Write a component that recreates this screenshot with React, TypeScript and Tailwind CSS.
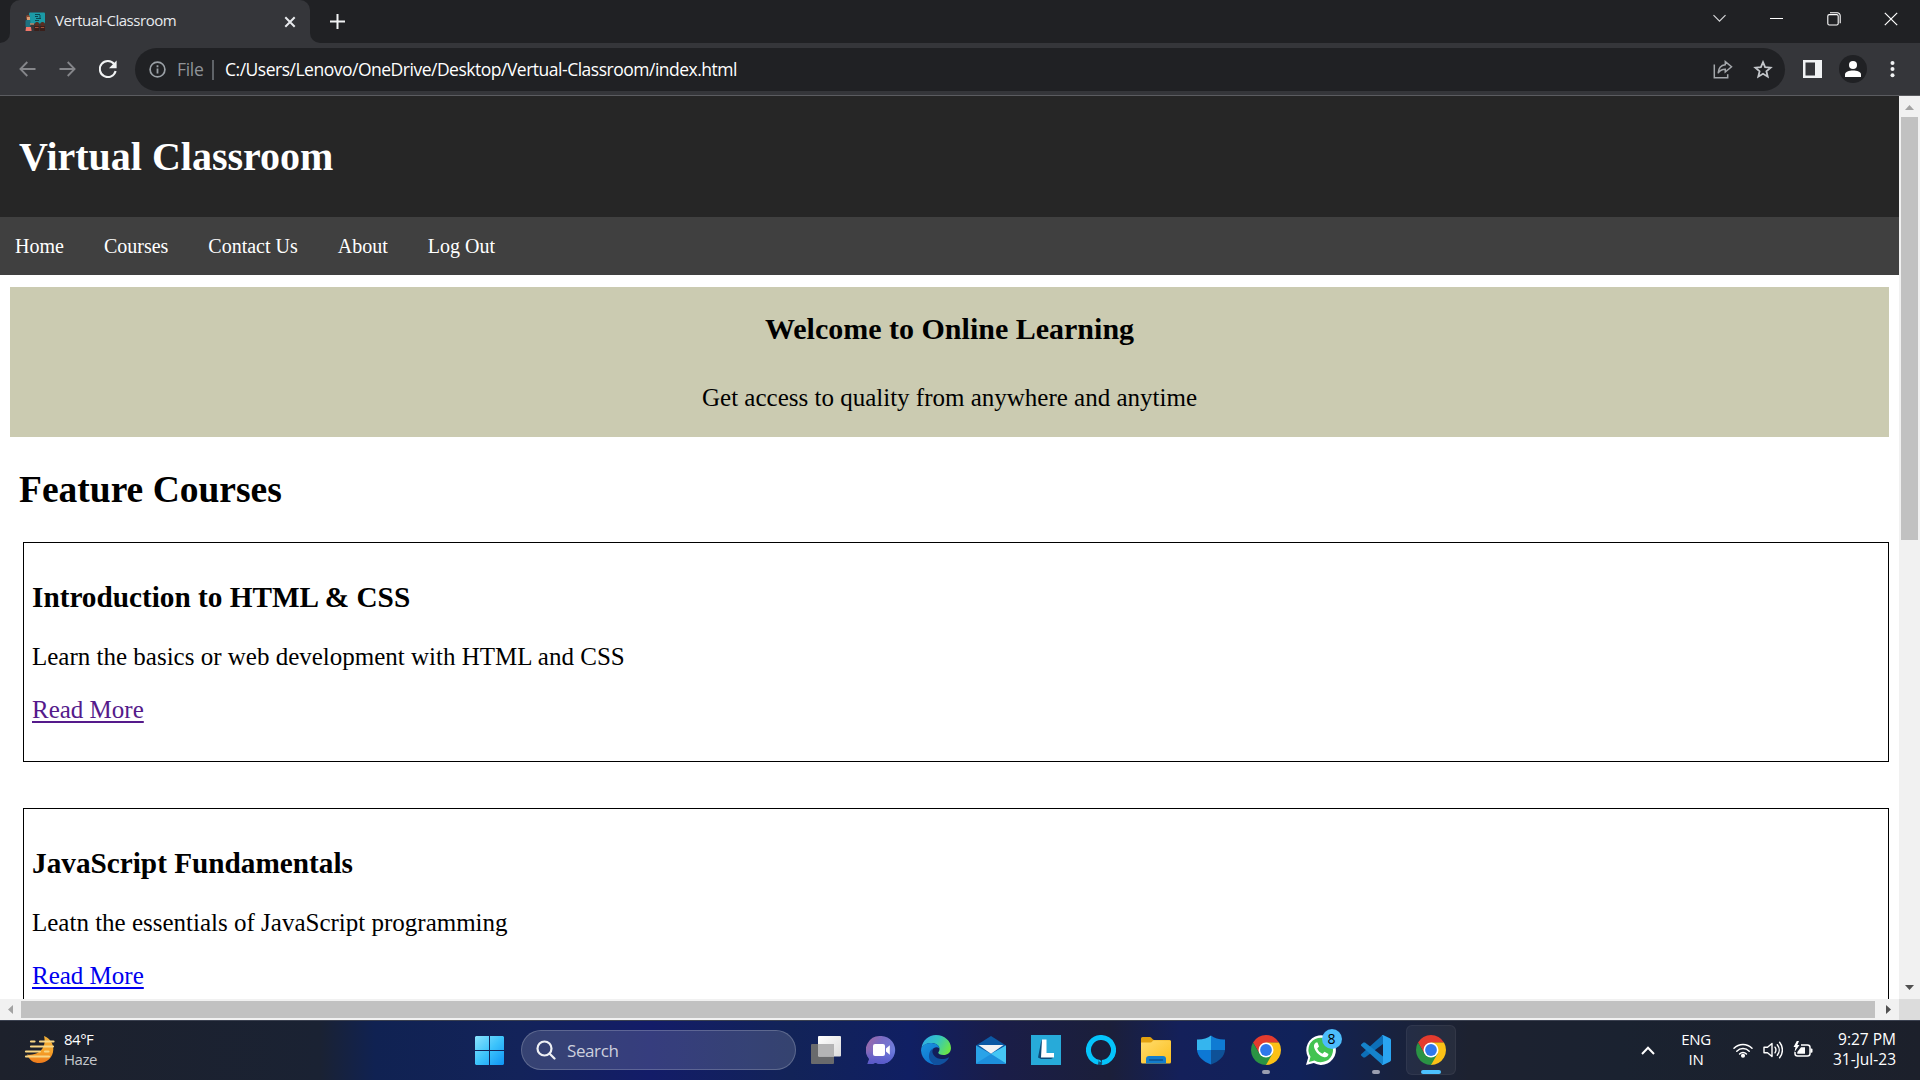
import React from "react";

const uiFont = "font-['Open_Sans','Noto_Sans',sans-serif]";

function Favicon() {
  return (
    <svg width="20" height="20" viewBox="0 0 20 20">
      <rect x="4" y="0.5" width="16" height="11" rx="1" fill="#1b9aa6" />
      <path d="M10 2.5h5M10 4.5h3M11 6.5h5M10 8.5h4M15 3v4" stroke="#0b4650" strokeWidth="1" fill="none" />
      <rect x="1" y="3" width="4" height="5" rx="2" fill="#8a4a32" />
      <rect x="2" y="5" width="3" height="3" fill="#d9a077" />
      <rect x="0.5" y="8" width="5" height="7" rx="1" fill="#1d7180" />
      <path d="M5 12h4" stroke="#d9a077" strokeWidth="1.2" />
      <path d="M1 15h5l0.6 4H0.5z" fill="#f0776a" />
      <rect x="10" y="10" width="4" height="4" rx="1.6" fill="#5a2d20" />
      <rect x="15.5" y="10" width="4" height="4" rx="1.6" fill="#5a2d20" />
      <rect x="9.3" y="14" width="5" height="5" fill="#3a1f1a" />
      <rect x="15" y="14" width="5" height="5" fill="#3a1f1a" />
      <path d="M10 15.5h3.5M15.8 15.5h3.4" stroke="#a4503a" />
    </svg>
  );
}

function TabStrip() {
  return (
    <div className="flex h-[43px] shrink-0 bg-[#202124]">
      <div className="flex w-[10px] items-end bg-[#35363a]">
        <div className="h-[43px] w-[10px] rounded-br-[10px] bg-[#202124]" />
      </div>
      <div className="flex w-[300px] items-center rounded-t-[10px] bg-[#35363a] pl-[15px] pr-[14px]">
        <Favicon />
        <span className="ml-[10px] flex-1 whitespace-nowrap pb-[3px] text-[15px] leading-[20px] tracking-[-0.45px] text-[#e8eaed]">
          Vertual-Classroom
        </span>
        <svg width="12" height="12" viewBox="0 0 12 12" stroke="#e8eaed" strokeWidth="2">
          <path d="M1.3 1.3l9.4 9.4M10.7 1.3l-9.4 9.4" />
        </svg>
      </div>
      <div className="flex w-[10px] bg-[#35363a]">
        <div className="h-[43px] w-[10px] rounded-bl-[10px] bg-[#202124]" />
      </div>
      <svg className="ml-[9px] mt-[13px]" width="17" height="17" viewBox="0 0 17 17" stroke="#f1f3f4" strokeWidth="2">
        <path d="M8.5 1v15M1 8.5h15" />
      </svg>
      <div className="ml-auto flex h-[37px] items-center pr-[22px]">
        <svg className="mr-[43px]" width="15" height="9" viewBox="0 0 15 9" fill="none" stroke="#d5d6d8" strokeWidth="1.2">
          <path d="M1.5 1.2l6 6 6-6" />
        </svg>
        <div className="mr-[44px] h-px w-[13px] bg-white" />
        <svg className="mr-[43px]" width="14" height="14" viewBox="0 0 14 14" fill="none" stroke="#fff" strokeWidth="1.1">
          <rect x="0.8" y="2.6" width="10.4" height="10.4" rx="1.5" />
          <path d="M3 0.8h7.2a3 3 0 0 1 3 3v7.4" />
        </svg>
        <svg width="14" height="14" viewBox="0 0 14 14" stroke="#fff" strokeWidth="1.2">
          <path d="M0.8 0.8l12.4 12.4M13.2 0.8L0.8 13.2" />
        </svg>
      </div>
    </div>
  );
}

function Toolbar() {
  return (
    <div className="flex h-[53px] shrink-0 items-start border-b border-[#5b5c60] bg-[#35363a] pt-[5px]">
      <div className="flex h-[43px] w-[135px] items-center pb-px pl-[19px]">
        <svg width="17" height="16" viewBox="0 0 17 16" fill="none" stroke="#85868a" strokeWidth="1.8">
          <path d="M16.5 8H1.6M8.3 1L1.4 8l6.9 7" />
        </svg>
        <svg className="ml-[23px]" width="17" height="16" viewBox="0 0 17 16" fill="none" stroke="#85868a" strokeWidth="1.8">
          <path d="M0.5 8h14.9M8.7 1l6.9 7-6.9 7" />
        </svg>
        <svg className="ml-[23px]" width="18" height="18" viewBox="0 0 18 18">
          <path d="M15.2 4.2A8 8 0 1 0 16.6 11" fill="none" stroke="#f1f3f4" strokeWidth="2.1" />
          <path d="M17.6 0.6v7.6H10z" fill="#f1f3f4" />
        </svg>
      </div>
      <div className="flex h-[43px] w-[1650px] items-center rounded-full bg-[#202124] pl-[14px] pr-[12px]">
        <svg width="17" height="17" viewBox="0 0 17 17">
          <circle cx="8.5" cy="8.5" r="7.4" fill="none" stroke="#9aa0a6" strokeWidth="1.7" />
          <path d="M8.5 7.6v4.8M8.5 4.2v2" stroke="#9aa0a6" strokeWidth="1.8" />
        </svg>
        <span className="ml-[11px] w-[35px] whitespace-nowrap pb-px text-[17.5px] leading-[24px] tracking-[-0.3px] text-[#8f9398]">File</span>
        <div className="h-[20px] w-[2px] bg-[#5f6368]" />
        <span className="ml-[11px] whitespace-nowrap pb-px text-[17.5px] leading-[24px] tracking-[-0.492px] text-white">
          C:/Users/Lenovo/OneDrive/Desktop/Vertual-Classroom/index.html
        </span>
        <svg className="ml-auto" width="20" height="19" viewBox="0 0 20 19" fill="none" stroke="#a4a7ab" strokeWidth="1.5">
          <path d="M1.3 4.5v13.2h13.4v-3.5" />
          <path d="M12.3 1.6l6.2 5.2-6.2 5.2V9.2c-3.6 0-5.6 1.2-7.2 4 .3-4.6 2.6-8 7.2-8.5z" />
        </svg>
        <svg className="ml-[20px]" width="20" height="19" viewBox="0 0 20 19" fill="none" stroke="#c4c7cb" strokeWidth="1.8">
          <path d="M10 2.2l2.1 5 5.5.5-4.2 3.6 1.3 5.4-4.7-2.9-4.7 2.9 1.3-5.4L2.4 7.7l5.5-.5z" />
        </svg>
      </div>
      <div className="flex h-[43px] flex-1 items-center pb-px pl-[18px]">
        <svg width="19" height="18" viewBox="0 0 19 18">
          <rect width="19" height="18" fill="#f1f3f4" />
          <rect x="2.5" y="2.5" width="9.5" height="13" fill="#35363a" />
        </svg>
        <div className="ml-[17px] flex size-[28px] items-center justify-center rounded-full bg-[#202124]">
          <svg width="16" height="16" viewBox="0 0 16 16" fill="#fff">
            <circle cx="8" cy="4" r="4" />
            <path d="M0 16v-2.5C0 10.8 4 9.5 8 9.5s8 1.3 8 4V16z" />
          </svg>
        </div>
        <svg className="ml-[23px]" width="5" height="18" viewBox="0 0 5 18" fill="#f1f3f4">
          <circle cx="2.5" cy="3" r="2" />
          <circle cx="2.5" cy="9" r="2" />
          <circle cx="2.5" cy="15.3" r="2" />
        </svg>
      </div>
    </div>
  );
}

const navItems = ["Home", "Courses", "Contact Us", "About", "Log Out"];

function CourseCard({ title, text, visited }: { title: string; text: string; visited?: boolean }) {
  return (
    <article className="ml-[23px] mr-[10px] h-[220px] shrink-0 border border-black pl-[8px] pt-[37px]">
      <h3 className="text-[29.25px] font-bold leading-[34px]">{title}</h3>
      <p className="mt-[29px] text-[25px] leading-[28px]">{text}</p>
      <p className="mt-[25px] text-[25px] leading-[28px]">
        <a
          className={
            visited
              ? "text-[#551a8b] underline decoration-2 underline-offset-[3px]"
              : "text-[#0000ee] underline decoration-2 underline-offset-[3px]"
          }
        >
          Read More
        </a>
      </p>
    </article>
  );
}

function WebPage() {
  return (
    <main className="flex h-[903px] min-w-0 flex-1 flex-col overflow-hidden bg-white font-['Liberation_Serif','Times_New_Roman',serif] text-black">
      <header className="h-[121px] shrink-0 bg-[#262626] pl-[19px] pt-[38px]">
        <h1 className="text-[40px] font-bold leading-[46px] text-white">Virtual Classroom</h1>
      </header>
      <nav className="flex h-[58px] shrink-0 gap-[40px] bg-[#404040] pl-[15px] text-[20px] leading-[59px] text-white">
        {navItems.map((item) => (
          <a key={item}>{item}</a>
        ))}
      </nav>
      <section className="mx-[10px] mt-[12px] h-[150px] shrink-0 bg-[#cbcbb1] pt-[25px] text-center">
        <h2 className="text-[30px] font-bold leading-[34px]">Welcome to Online Learning</h2>
        <p className="mt-[38px] text-[25px] leading-[28px]">Get access to quality from anywhere and anytime</p>
      </section>
      <h2 className="mb-[31px] ml-[19px] mt-[32px] text-[37.5px] font-bold leading-[42px]">Feature Courses</h2>
      <CourseCard title="Introduction to HTML & CSS" text="Learn the basics or web development with HTML and CSS" visited />
      <div className="h-[46px] shrink-0" />
      <CourseCard title="JavaScript Fundamentals" text="Leatn the essentials of JavaScript programming" />
    </main>
  );
}

function VerticalScrollbar() {
  return (
    <div className="flex w-[21px] flex-col items-center bg-[#f1f1f1]">
      <svg className="mt-[9px]" width="9" height="5" viewBox="0 0 9 5" fill="#a3a3a3">
        <path d="M4.5 0L9 5H0z" />
      </svg>
      <div className="mt-[7px] h-[423px] w-[17px] bg-[#c1c1c1]" />
      <svg className="mb-[9px] mt-auto" width="9" height="5" viewBox="0 0 9 5" fill="#505050">
        <path d="M0 0h9L4.5 5z" />
      </svg>
    </div>
  );
}

function HorizontalScrollbar() {
  return (
    <div className="flex h-[21px] shrink-0 items-center bg-[#f1f1f1]">
      <svg className="ml-[8px]" width="5" height="9" viewBox="0 0 5 9" fill="#a3a3a3">
        <path d="M0 4.5L5 0v9z" />
      </svg>
      <div className="ml-[8px] h-[17px] w-[1854px] bg-[#c1c1c1]" />
      <svg className="ml-[11px]" width="5" height="9" viewBox="0 0 5 9" fill="#505050">
        <path d="M0 0l5 4.5L0 9z" />
      </svg>
      <div className="ml-auto h-[21px] w-[21px] bg-[#dcdcdc]" />
    </div>
  );
}

function WeatherIcon() {
  return (
    <svg width="32" height="30" viewBox="0 0 32 30">
      <defs>
        <linearGradient id="moon" x1="0" y1="0" x2="0" y2="1">
          <stop offset="0" stopColor="#f0b03a" />
          <stop offset="0.6" stopColor="#f5a028" />
          <stop offset="1" stopColor="#ee7a1c" />
        </linearGradient>
      </defs>
      <path d="M20 1c6 2.5 9.500 7.5 9.300 13.500C29 22.500 23 28 15.500 28 9.500 28 5.500 25.500 3 19.500c4 .5 8.500 0 12-2.500 5.500-4 6.500-10 5-16z" fill="url(#moon)" />
      <g stroke="#f7d684" strokeWidth="2.2" strokeLinecap="round">
        <path d="M7 6.5h3.500M16 6.5h13.500M7 11.5h22" />
        <path d="M2 16.5h14M21 16.5h3.500M2 21.5h23" />
      </g>
    </svg>
  );
}

function WindowsIcon() {
  return (
    <svg width="29" height="29" viewBox="0 0 29 29">
      <defs>
        <linearGradient id="win" x1="0" y1="0" x2="1" y2="1">
          <stop offset="0" stopColor="#8be2fd" />
          <stop offset="0.5" stopColor="#3cc3fb" />
          <stop offset="1" stopColor="#0f94f5" />
        </linearGradient>
      </defs>
      <path d="M1 0h13v14H0V1zM15 0h13l1 1v13H15zM0 15h14v14H1l-1-1zM15 15h14v13l-1 1H15z" fill="url(#win)" />
    </svg>
  );
}

function TaskViewIcon() {
  return (
    <svg width="30" height="30" viewBox="0 0 30 30">
      <defs>
        <linearGradient id="tvf" x1="0" y1="0" x2="1" y2="1">
          <stop offset="0" stopColor="#fff" />
          <stop offset="1" stopColor="#dcdcdc" />
        </linearGradient>
      </defs>
      <rect x="0" y="9" width="23" height="20" rx="1" fill="#696a6c" />
      <rect x="7" y="1" width="23" height="20.5" rx="1" fill="url(#tvf)" />
      <path d="M7 9h16v12.5H8l-1-1z" fill="#b4b4b5" />
    </svg>
  );
}

function ChatIcon() {
  return (
    <svg width="30" height="30" viewBox="0 0 30 30">
      <defs>
        <linearGradient id="chat" x1="0" y1="0" x2="1" y2="0.6">
          <stop offset="0" stopColor="#a5689f" />
          <stop offset="0.45" stopColor="#7b6cc4" />
          <stop offset="1" stopColor="#6b7fe0" />
        </linearGradient>
        <linearGradient id="chatb" x1="0" y1="0" x2="0" y2="1">
          <stop offset="0.5" stopColor="#5757c8" stopOpacity="0" />
          <stop offset="1" stopColor="#5757c8" />
        </linearGradient>
      </defs>
      <path d="M15.5 1a14 14 0 1 1-6 26.8c-2.5 1.2-5 1.5-8 .9.5-2 1.6-3 1.5-5A14 14 0 0 1 15.5 1z" fill="url(#chat)" />
      <path d="M15.5 1a14 14 0 1 1-6 26.8c-2.5 1.2-5 1.5-8 .9.5-2 1.6-3 1.5-5A14 14 0 0 1 15.5 1z" fill="url(#chatb)" />
      <rect x="7" y="9" width="12" height="12" rx="2" fill="#fff" />
      <path d="M20 13.5l3.8-3.2v9.4L20 16.5z" fill="#fff" />
    </svg>
  );
}

function EdgeIcon() {
  return (
    <svg width="30" height="30" viewBox="0 0 30 30">
      <defs>
        <linearGradient id="edgeTop" x1="0" y1="0.2" x2="1" y2="0.6">
          <stop offset="0" stopColor="#2fa9ea" />
          <stop offset="0.5" stopColor="#34c6c0" />
          <stop offset="1" stopColor="#6be546" />
        </linearGradient>
        <linearGradient id="edgeLeft" x1="0" y1="0" x2="0.6" y2="1">
          <stop offset="0" stopColor="#1b94dd" />
          <stop offset="1" stopColor="#0c72cf" />
        </linearGradient>
      </defs>
      <path d="M0.5 13C1.5 5.5 7.5 0 15 0c8.5 0 15 6 15 13 0 4.5-3.5 7-7.5 7-3.5 0-5.2-1-5.2-2.2 0-1 1.2-1.4 1.2-3.8 0-3.5-3.6-6-8-6-4.6 0-8.3 2-10 5z" fill="url(#edgeTop)" />
      <path d="M0.3 13C2.5 9.5 6 7.8 10.5 8c4.5.2 7.8 2.5 8 5.5-2.2-2-6-1.5-7.5 2-1.5 4.5 1 11 8.5 13.5A15 15 0 0 1 0 15.5z" fill="url(#edgeLeft)" />
      <path d="M12 13.5c-2.5 5.5 3 10.5 8.5 10.5 3 0 5-.7 6.8-1.6.5-.2.7.2.5.5C25 27.5 20.5 30 16 30 10 29 7.5 24.5 8 20c.3-3 1.7-5.3 4-6.5z" fill="#10519f" />
    </svg>
  );
}

function MailIcon() {
  return (
    <svg width="30" height="30" viewBox="0 0 30 30">
      <path d="M0 10.5L15 1l15 9.5V20H0z" fill="#0c59a4" />
      <path d="M0 10.5l15 8.5 15-8.5V28a1 1 0 0 1-1 1H1a1 1 0 0 1-1-1z" fill="#2aa3e8" />
      <path d="M30 10.5V28.5L15 19z" fill="#45c6f4" />
      <path d="M30 28.5L15 19 0 28.5l1 .5h28z" fill="#1d8fdc" />
      <path d="M2.5 10h25L15 18.8z" fill="#f3f3f4" />
    </svg>
  );
}

function LenovoIcon() {
  return (
    <div className="flex size-[30px] items-center justify-center bg-[#27aad9]">
      <svg width="30" height="30" viewBox="0 0 30 30">
        <path d="M10.5 4.5L7 22.5l3 1.5h10l3-1.5-10-2z" fill="#0b4a78" />
        <path d="M11 4.5h4.5V18H23v4.5H10z" fill="#fff" />
      </svg>
    </div>
  );
}

function AlexaIcon() {
  return (
    <svg width="30" height="30" viewBox="0 0 30 30" fill="none">
      <path d="M12.3 27.2A12.5 12.5 0 1 1 16 27.45" stroke="#05c4fb" strokeWidth="5" />
      <path d="M12.6 24.5v5.3c7.5.7 14-3.5 16.5-10l-4-1.5c-1.5 4-5.5 7-9.3 9.7-.3-2-1-3-3.2-3.5z" fill="#05c4fb" />
      <path d="M13.1 26.5V30h2.5c.1-1 .3-1.5.9-2.2z" fill="#1b1f3c" opacity="0.7" />
    </svg>
  );
}

function FolderIcon() {
  return (
    <svg width="30" height="30" viewBox="0 0 30 30">
      <defs>
        <linearGradient id="fold" x1="0" y1="0" x2="1" y2="1">
          <stop offset="0" stopColor="#ffdc6e" />
          <stop offset="1" stopColor="#fcbf1d" />
        </linearGradient>
      </defs>
      <path d="M0 3.5A1.5 1.5 0 0 1 1.5 2H9c1.5 0 2.5 3 4 3h15.5A1.5 1.5 0 0 1 30 6.5V12H0z" fill="#e2a110" />
      <path d="M0 7.5h9.5c1.5 0 2-2.3 3.5-2.3h15.5A1.5 1.5 0 0 1 30 6.7V27a1.5 1.5 0 0 1-1.5 1.5h-27A1.5 1.5 0 0 1 0 27z" fill="url(#fold)" />
      <path d="M5 28.5V24a3 3 0 0 1 3-3h14a3 3 0 0 1 3 3v4.5z" fill="#137dcc" />
      <path d="M8.5 25h13" stroke="#0c508f" strokeWidth="1.3" strokeLinecap="round" />
    </svg>
  );
}

function ShieldIcon() {
  return (
    <svg width="30" height="30" viewBox="0 0 30 30">
      <path d="M15 0.5C11.5 3.5 6.5 4.7 1 4.5V15h14z" fill="#35b5ee" />
      <path d="M15 0.5c3.5 3 8.5 4.2 14 4V15H15z" fill="#0f7bd3" />
      <path d="M1 15c.5 6.5 6 11.5 14 14.5V15z" fill="#0d78d4" />
      <path d="M29 15c-.5 6.5-6 11.5-14 14.5V15z" fill="#0e5197" />
    </svg>
  );
}

function ChromeIcon() {
  return (
    <svg width="30" height="30" viewBox="0 0 30 30">
      <path d="M2.01 7.5A15 15 0 0 1 27.99 7.5L15 7.8 8.5 18.75z" fill="#e33b2e" />
      <path d="M27.99 7.5A15 15 0 0 1 15 30l-1-4 7.5-7.25L15 7.5z" fill="#fbc116" />
      <path d="M2.01 7.5A15 15 0 0 0 15 30l6.5-11.25L15 21l-6.5-2.25z" fill="#2a9344" />
      <circle cx="15" cy="15" r="7.5" fill="#fff" />
      <circle cx="15" cy="15" r="5.9" fill="#2f78ec" />
    </svg>
  );
}

function WhatsAppIcon() {
  return (
    <svg width="30" height="30" viewBox="0 0 30 30">
      <path d="M0 30l2.2-7.6A14.8 14.8 0 1 1 7.8 28z" fill="#fff" />
      <path d="M3 27l1.5-5.2A12.3 12.3 0 1 1 8.4 25.5z" fill="#42c351" />
      <path d="M10 7.5c-2.2 1.3-2.5 3.5-1.5 6C10 17.5 13.5 20.8 17.5 22c2.5.7 4.5-.3 5-3l-4-2.3-2 2c-2.5-1-4.2-2.7-5.3-5.2L13 11.5 11.5 7.6z" fill="#fff" />
    </svg>
  );
}

function VSCodeIcon() {
  return (
    <svg width="30" height="30" viewBox="0 0 30 30">
      <path d="M22 0v9L4 22.5H2.4l-2-1.8a1 1 0 0 1 0-1.6L20.5 1z" fill="#0d6fb8" />
      <path d="M0.4 10.9a1 1 0 0 1 0-1.6l2-1.8H4L22 21.5V30l-1.5-1z" fill="#1583cb" />
      <path d="M22 0l6.8 3.2A2 2 0 0 1 30 5v20a2 2 0 0 1-1.2 1.8L22 30c-.8 0-1.3-.5-1.5-1 1 .5 1.5 0 1.5-1V2c0-1-.5-1.5-1.5-1 .3-.6.8-1 1.5-1z" fill="#2aa5f2" />
    </svg>
  );
}

const pinned: { name: string; icon: React.ReactNode; state?: "open" | "active"; badge?: string }[] = [
  { name: "taskview", icon: <TaskViewIcon /> },
  { name: "chat", icon: <ChatIcon /> },
  { name: "edge", icon: <EdgeIcon /> },
  { name: "mail", icon: <MailIcon /> },
  { name: "lenovo", icon: <LenovoIcon /> },
  { name: "alexa", icon: <AlexaIcon /> },
  { name: "explorer", icon: <FolderIcon /> },
  { name: "security", icon: <ShieldIcon /> },
  { name: "chrome", icon: <ChromeIcon />, state: "open" },
  { name: "whatsapp", icon: <WhatsAppIcon />, badge: "8" },
  { name: "vscode", icon: <VSCodeIcon />, state: "open" },
  { name: "chrome-active", icon: <ChromeIcon />, state: "active" },
];

function Taskbar() {
  return (
    <footer className="flex h-[60px] shrink-0 items-center border-t border-[#3b4150] bg-[linear-gradient(90deg,#1d212c_0px,#1a2233_320px,#102252_375px,#13235a_520px,#131c68_650px,#122358_790px,#101f63_910px,#1a1d48_1000px,#1b1f3a_1110px,#14205a_1180px,#10225a_1300px,#18223f_1390px,#1d2230_1470px,#1a2230_1620px,#1c202b_1920px)] pb-px">
      <div className="flex w-[474px] items-center pl-[24px]">
        <WeatherIcon />
        <div className="ml-[8px] pb-[3px] text-[15px] leading-[20px] tracking-[-0.5px]">
          <div className="text-white">84°F</div>
          <div className="text-[#c4c7cc]">Haze</div>
        </div>
      </div>
      <div className="flex w-[47px] pl-px">
        <WindowsIcon />
      </div>
      <div className="flex h-[40px] w-[275px] items-center rounded-full border border-white/20 bg-white/15 pl-[14px]">
        <svg width="20" height="20" viewBox="0 0 20 20" fill="none" stroke="#eef0f4" strokeWidth="2.2">
          <circle cx="8.5" cy="8.5" r="7" />
          <path d="M13.5 13.5l5 5" strokeLinecap="round" />
        </svg>
        <span className="ml-[11px] pt-px text-[17px] leading-[24px] tracking-[-0.4px] text-[#cdd0de]">Search</span>
      </div>
      <div className="ml-[2px] flex">
        {pinned.map((app) => (
          <div key={app.name} className="flex h-[50px] w-[55px] justify-center">
            <div
              className={
                app.state === "active"
                  ? "relative flex size-[50px] items-center justify-center rounded-[6px] border border-white/5 bg-white/5"
                  : "relative flex size-[50px] items-center justify-center"
              }
            >
              {app.icon}
              {app.state === "open" && <div className="absolute bottom-px left-[21px] h-[4px] w-[8px] rounded-full bg-[#9a9eb0]" />}
              {app.state === "active" && <div className="absolute bottom-0 left-[14px] h-[4px] w-[20px] rounded-full bg-[#4cc2ff]" />}
              {app.badge && (
                <div className="absolute left-[26px] top-[4px] flex size-[20px] items-center justify-center rounded-full bg-[#4cbcfb] text-[14px] leading-none text-black">
                  {app.badge}
                </div>
              )}
            </div>
          </div>
        ))}
      </div>
      <div className="ml-auto flex items-center pr-[24px] text-[15px] leading-[20px] tracking-[-0.3px] text-white">
        <svg width="14" height="9" viewBox="0 0 14 9" fill="none" stroke="#fff" strokeWidth="2">
          <path d="M1 8l6-6.2L13 8" />
        </svg>
        <div className="ml-[26px] w-[30px] pb-[2px] text-center">
          <div>ENG</div>
          <div>IN</div>
        </div>
        <svg className="ml-[22px]" width="20" height="16" viewBox="0 0 20 16" fill="none" stroke="#fff" strokeWidth="1.5" strokeLinecap="round">
          <path d="M1 6.2a12.7 12.7 0 0 1 18 0M3.8 9.2a8.7 8.7 0 0 1 12.4 0M6.6 12a4.8 4.8 0 0 1 6.8 0" />
          <circle cx="10" cy="13.8" r="1.3" fill="#fff" />
        </svg>
        <svg className="ml-[10px]" width="20" height="18" viewBox="0 0 20 18" fill="none" stroke="#fff" strokeWidth="1.4" strokeLinecap="round" strokeLinejoin="round">
          <path d="M1 6.3h3.5L9 2.5v13l-4.5-3.8H1z" />
          <path d="M12 6.2a5 5 0 0 1 0 5.6M14.3 3.7a8.4 8.4 0 0 1 0 10.6M16.6 1.3a12 12 0 0 1 0 15.4" />
        </svg>
        <svg className="ml-[10px]" width="20" height="18" viewBox="0 0 20 18">
          <path d="M8 4h6.5A2.5 2.5 0 0 1 17 6.5v6A2.5 2.5 0 0 1 14.5 15h-10A2.5 2.5 0 0 1 2 12.5V11" fill="none" stroke="#fff" strokeWidth="1.5" />
          <path d="M17.5 7.5h1a1 1 0 0 1 1 1v2.2a1 1 0 0 1-1 1h-1z" fill="#fff" />
          <path d="M8 6.3h4v6.5H4.3V11z" fill="#fff" />
          <path d="M3.8 0L0.5 6h2L1.5 11 6.5 4H4.3L6 0z" fill="#fff" />
        </svg>
        <div className="w-[83px] whitespace-nowrap pb-[3px] text-right text-[15.5px] tracking-[0px]">
          <div>9:27 PM</div>
          <div>31-Jul-23</div>
        </div>
      </div>
    </footer>
  );
}

export default function App() {
  return (
    <div className={`flex h-[1080px] w-[1920px] flex-col overflow-hidden ${uiFont}`}>
      <TabStrip />
      <Toolbar />
      <div className="flex h-[903px] shrink-0">
        <WebPage />
        <VerticalScrollbar />
      </div>
      <HorizontalScrollbar />
      <Taskbar />
    </div>
  );
}
